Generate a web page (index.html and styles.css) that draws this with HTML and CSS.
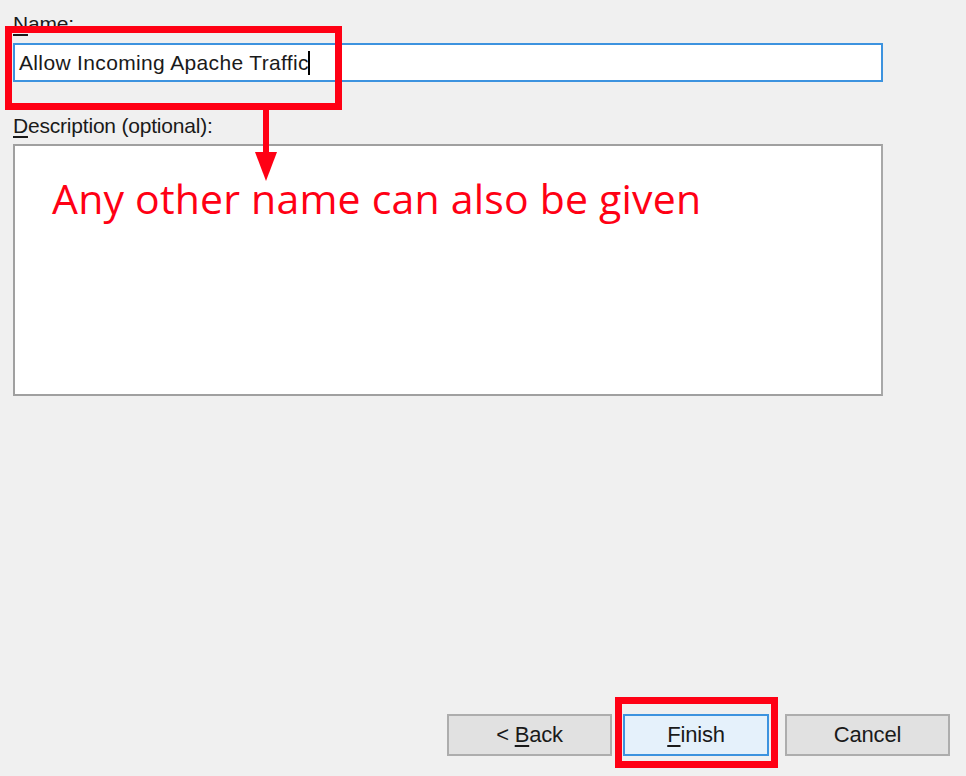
FILE: index.html
```html
<!DOCTYPE html>
<html>
<head>
<meta charset="utf-8">
<link rel="stylesheet" href="styles.css">
</head>
<body>
<div class="dialog">
  <div class="field">
    <div class="label"><u>N</u>ame:</div>
    <div class="input focused"><span>Allow Incoming Apache Traffic</span><span class="caret"></span></div>
  </div>
  <div class="field">
    <div class="label"><u>D</u>escription (optional):</div>
    <div class="textarea"></div>
  </div>
  <div class="spacer"></div>
  <div class="buttons">
    <div class="btn"><span>&lt; <u>B</u>ack</span></div>
    <div class="btn primary"><span><u>F</u>inish</span></div>
    <div class="btn"><span>Cancel</span></div>
  </div>

  <div class="mark mark-name"></div>
  <div class="arrow">
    <div class="arrow-line"></div>
    <div class="arrow-head"></div>
  </div>
  <div class="note">Any other name can also be given</div>
  <div class="mark mark-finish"></div>
</div>
</body>
</html>
```

FILE: styles.css
```css
html, body {
  margin: 0;
  padding: 0;
  background: #f0f0f0;
}
.dialog {
  position: relative;
  height: 776px;
  display: flex;
  flex-direction: column;
  padding: 12px 83px 0 13px;
  box-sizing: border-box;
  font-family: "Liberation Sans", Arial, sans-serif;
  font-size: 21px;
  color: #1a1a1a;
}
.field {
  display: flex;
  flex-direction: column;
}
.label {
  height: 31px;
  line-height: 24px;
  letter-spacing: -0.2px;
}
.label u {
  text-underline-offset: 3px;
}
.input {
  height: 39px;
  box-sizing: border-box;
  border: 2px solid #3d93df;
  background: #fff;
  padding: 0 0 0 4px;
  line-height: 35px;
  letter-spacing: 0.35px;
  display: flex;
  align-items: center;
}
.caret {
  display: inline-block;
  width: 2px;
  height: 24px;
  background: #000;
  margin-left: -1px;
}
.field + .field {
  margin-top: 32px;
}
.field + .field .label {
  height: 30px;
}
.textarea {
  height: 252px;
  box-sizing: border-box;
  border: 2px solid #a0a0a0;
  border-right-color: #a8a8a8;
  background: #fff;
}
.spacer {
  flex: 1;
}
.buttons {
  display: flex;
  justify-content: flex-end;
  margin-right: -67px;
  margin-bottom: 20px;
  height: 42px;
}
.btn {
  width: 165px;
  box-sizing: border-box;
  border: 2px solid #adadad;
  background: #e1e1e1;
  display: flex;
  align-items: center;
  justify-content: center;
  font-size: 22px;
  letter-spacing: -0.2px;
}
.btn u {
  text-underline-offset: 3px;
}
.btn.primary {
  width: 146px;
  margin: 0 16px 0 11px;
  border-color: #3d93df;
  background: #e5f1fb;
}
.mark {
  position: absolute;
  border: 7px solid #ff0014;
  box-sizing: border-box;
}
.mark-name {
  left: 5px;
  top: 26px;
  width: 337px;
  height: 84px;
}
.mark-finish {
  left: 615px;
  top: 697px;
  width: 163px;
  height: 71px;
}
.arrow {
  position: absolute;
  left: 255px;
  top: 108px;
  width: 22px;
  display: flex;
  flex-direction: column;
  align-items: center;
}
.arrow-line {
  width: 6px;
  height: 44px;
  background: #ff0014;
}
.arrow-head {
  width: 0;
  height: 0;
  border-left: 11px solid transparent;
  border-right: 11px solid transparent;
  border-top: 29px solid #ff0014;
}
.note {
  position: absolute;
  left: 52px;
  top: 171px;
  font-family: "Open Sans", sans-serif;
  font-size: 41px;
  letter-spacing: 0.2px;
  line-height: 54px;
  color: #ff0014;
  white-space: nowrap;
}
```
